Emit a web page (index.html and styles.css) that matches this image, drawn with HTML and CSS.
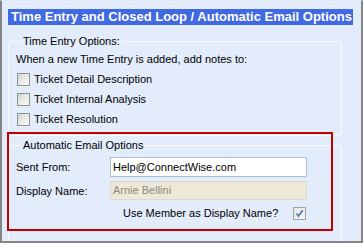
FILE: index.html
```html
<!DOCTYPE html>
<html>
<head>
<meta charset="utf-8">
<link rel="stylesheet" href="styles.css">
</head>
<body>
<div class="frame">
  <div class="title">Time Entry and Closed Loop / Automatic Email Options</div>
  <fieldset class="group group-time">
    <legend>Time Entry Options:</legend>
    <div class="desc">When a new Time Entry is added, add notes to:</div>
    <div class="check-row"><span class="cb"></span><span class="cb-label">Ticket Detail Description</span></div>
    <div class="check-row"><span class="cb"></span><span class="cb-label">Ticket Internal Analysis</span></div>
    <div class="check-row"><span class="cb"></span><span class="cb-label">Ticket Resolution</span></div>
  </fieldset>
  <fieldset class="group group-email">
    <legend>Automatic Email Options</legend>
    <div class="field-row">
      <span class="field-label">Sent From:</span>
      <span class="input">Help@ConnectWise.com</span>
    </div>
    <div class="field-row">
      <span class="field-label">Display Name:</span>
      <span class="input input-disabled">Arnie Bellini</span>
    </div>
    <div class="member-row">
      <span class="member-label">Use Member as Display Name?</span>
      <span class="cb cb-checked"><svg width="11" height="11" viewBox="0 0 11 11"><path d="M2.5 5.5 L4.5 8 L8.8 2.2" fill="none" stroke="#5d77c2" stroke-width="1.8"/></svg></span>
    </div>
  </fieldset>
  <div class="highlight"></div>
</div>
</body>
</html>
```

FILE: styles.css
```css
html, body {
  margin: 0;
  padding: 0;
  background: #ffffff;
}
.frame {
  position: relative;
  width: 363px;
  height: 243px;
  box-sizing: border-box;
  border: 2px solid #858585;
  border-top: 1px solid #dfe7f3;
  background: #e3ecfb;
  overflow: hidden;
  padding: 8px 8px 0 6px;
  font-family: "Liberation Sans", Arial, sans-serif;
  font-size: 11px;
  color: #000;
}
.title {
  height: 16px;
  line-height: 16px;
  background: #4169e1;
  color: #fff;
  font-weight: bold;
  font-size: 13px;
  padding-left: 3px;
  white-space: nowrap;
}
.group {
  margin: 0 11px 0 0;
  border: 1px solid #f7f9fd;
  border-radius: 3px;
  padding: 0 6px 0 7px;
  min-width: 0;
}
.group legend {
  padding: 0 2px;
  margin-left: 5px;
  line-height: 13px;
  font-size: 11px;
}
.group-time {
  margin-top: 10px;
  padding-bottom: 6px;
}
.desc {
  line-height: 14px;
  margin-top: 4px;
  margin-bottom: 3px;
}
.check-row {
  display: flex;
  align-items: center;
  height: 20px;
  padding-left: 1px;
}
.cb {
  width: 11px;
  height: 11px;
  border: 1px solid #8f9092;
  background: linear-gradient(135deg, #d4d4cf 0%, #ecece8 55%, #fafafa 100%);
  flex: none;
  display: flex;
  align-items: center;
  justify-content: center;
}
.cb-label {
  margin-left: 4px;
  white-space: nowrap;
}
.group-email {
  margin-top: 3px;
  height: 140px;
}
.field-row {
  display: flex;
  align-items: center;
  height: 23px;
  margin-top: 3px;
}
.field-row + .field-row {
  margin-top: 1px;
}
.field-label {
  width: 94px;
  flex: none;
  white-space: nowrap;
}
.input {
  width: 193px;
  height: 18px;
  line-height: 18px;
  border: 1px solid #a7c0dc;
  background: #fff;
  padding-left: 2px;
  white-space: nowrap;
  flex: none;
}
.input-disabled {
  height: 17px;
  line-height: 17px;
  background: #ece9d8;
  border-color: #ddd9cb;
  color: #8c8a80;
}
.member-row {
  display: flex;
  align-items: center;
  height: 22px;
  padding-left: 107px;
}
.member-label {
  white-space: nowrap;
  width: 170px;
}
.cb-checked {
  border-color: #a2a2a2;
  background: linear-gradient(135deg, #e6e6e2 0%, #f4f4f2 100%);
}
.highlight {
  position: absolute;
  left: 5px;
  top: 131px;
  width: 322px;
  height: 95px;
  border: 2.5px solid #c00000;
}
```
